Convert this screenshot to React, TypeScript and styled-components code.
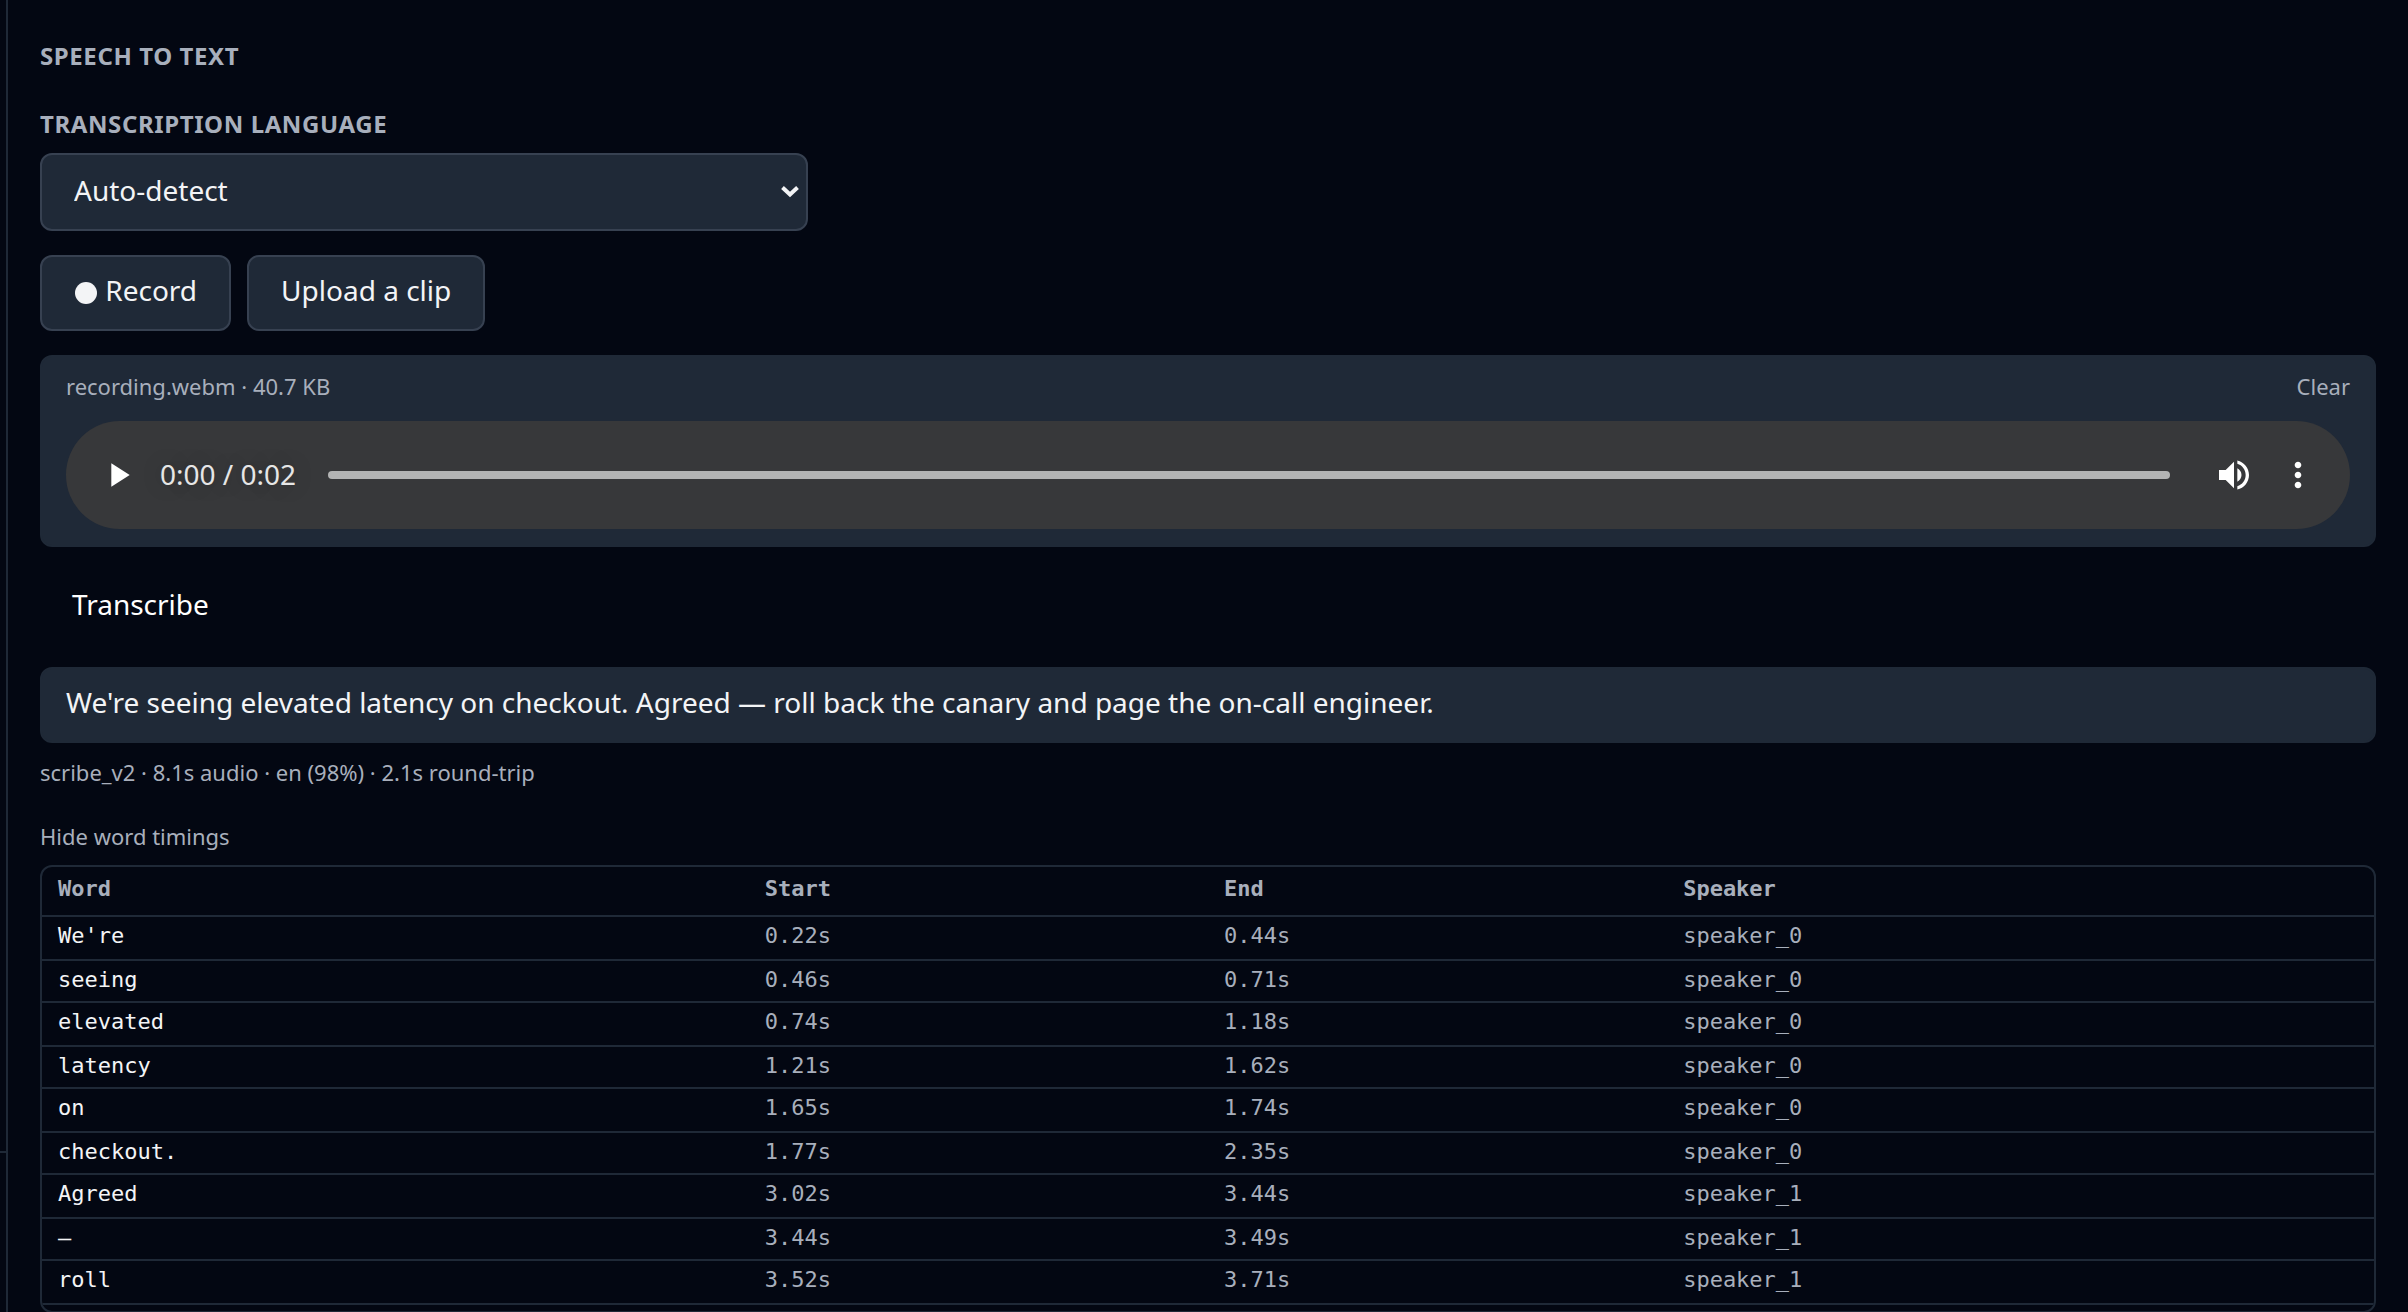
import React, { useState } from "react";
import styled, { createGlobalStyle, css } from "styled-components";

const sans = `"Noto Sans", "Open Sans", sans-serif`;
const mono = `"DejaVu Sans Mono", monospace`;

const c = {
  page: "#030712",
  surface: "#1f2937",
  line: "#1f2937",
  edge: "#374151",
  text: "#f3f4f6",
  muted: "#a8afbc",
  player: "#37383a",
};

const GlobalStyle = createGlobalStyle`
  *, *::before, *::after { box-sizing: border-box; }
  body { margin: 0; background: ${c.page}; color: ${c.text}; font-family: ${sans}; }
  button, select, input { font: inherit; color: inherit; margin: 0; }
`;

const Page = styled.div`
  display: flex;
  height: 100vh;
  overflow: hidden;
`;

const Sidebar = styled.aside`
  flex: none;
  width: 8px;
  border-right: 2px solid ${c.line};
  display: flex;
  flex-direction: column;
`;

const SidebarBody = styled.div`
  flex: 1;
`;

const SidebarFooter = styled.div`
  height: 161px;
  border-top: 2px solid ${c.line};
`;

const Main = styled.main`
  flex: 1;
  min-width: 0;
  padding: 40px 32px 0;
  display: flex;
  flex-direction: column;
  align-items: stretch;
  gap: 24px;
`;

const heading = css`
  margin: 0;
  font-size: 24px;
  line-height: 32px;
  font-weight: 700;
  letter-spacing: 0.025em;
  text-transform: uppercase;
  color: ${c.muted};
`;

const Title = styled.h2`
  ${heading}
  margin-bottom: 12px;
`;

const Field = styled.div`
  display: flex;
  flex-direction: column;
  gap: 13px;
`;

const FieldLabel = styled.label`
  ${heading}
`;

const SelectWrap = styled.div`
  display: grid;
  align-items: center;
  width: 100%;
  max-width: 768px;

  > * {
    grid-area: 1 / 1;
  }
`;

const Select = styled.select`
  appearance: none;
  width: 100%;
  height: 78px;
  padding: 0 32px 4px;
  font-size: 28px;
  background-color: ${c.surface};
  border: 2px solid ${c.edge};
  border-radius: 12px;
`;

const Chevron = styled.svg`
  justify-self: end;
  width: 20px;
  height: 14px;
  margin-right: 8px;
  pointer-events: none;
  fill: none;
  stroke: ${c.text};
  stroke-width: 4;
`;

const ButtonRow = styled.div`
  display: flex;
  gap: 16px;
`;

const Button = styled.button<{ $plain?: boolean }>`
  align-self: flex-start;
  padding: 13px 32px 19px;
  font-size: 28px;
  line-height: 40px;
  border-radius: 12px;
  border: ${(p) => (p.$plain ? "0" : `2px solid ${c.edge}`)};
  background: ${(p) => (p.$plain ? "transparent" : c.surface)};
  color: ${(p) => (p.$plain ? "#ffffff" : c.text)};
`;

const RecordDot = styled.span`
  display: inline-block;
  width: 22px;
  height: 22px;
  margin: 0 1px;
  vertical-align: -3px;
  border-radius: 50%;
  background: currentColor;
`;

const Card = styled.section`
  background: ${c.surface};
  border: 2px solid ${c.surface};
  border-radius: 12px;
  padding: 13px 24px 16px;
  display: flex;
  flex-direction: column;
  gap: 19px;
`;

const CardHead = styled.div`
  display: flex;
  justify-content: space-between;
  font-size: 22px;
  line-height: 32px;
  color: ${c.muted};
`;

const LinkButton = styled.button`
  align-self: flex-start;
  padding: 0;
  border: 0;
  background: none;
  font-size: 22px;
  line-height: 32px;
  color: ${c.muted};
`;

const Player = styled.div`
  display: flex;
  align-items: center;
  height: 108px;
  padding: 0 20px;
  border-radius: 54px;
  background: ${c.player};
`;

const PlayerButton = styled.button`
  flex: none;
  display: flex;
  align-items: center;
  justify-content: center;
  width: 64px;
  height: 64px;
  padding: 0;
  border: 0;
  background: none;
  color: #ffffff;

  svg {
    width: 40px;
    height: 40px;
    fill: currentColor;
  }
`;

const Time = styled.span`
  padding: 0 32px 2px 10px;
  font-size: 28px;
  line-height: 40px;
  white-space: nowrap;
  color: #e6e6e6;
  text-shadow: 0 0 20px rgba(0, 0, 0, 0.25);
`;

const Seek = styled.input`
  appearance: none;
  flex: 1;
  min-width: 0;
  height: 8px;
  margin-right: 32px;
  border-radius: 4px;
  background: #b3b4b4;

  &::-webkit-slider-thumb {
    appearance: none;
    width: 0;
    height: 0;
  }
`;

const Transcript = styled.p`
  margin: 0;
  padding: 13px 24px 19px;
  background: ${c.surface};
  border: 2px solid ${c.surface};
  border-radius: 12px;
  font-size: 28px;
  line-height: 40px;
`;

const Result = styled.div`
  display: flex;
  flex-direction: column;
  gap: 13px;
`;

const Meta = styled.p`
  margin: 0;
  font-size: 22px;
  line-height: 32px;
  color: ${c.muted};
`;

const Timings = styled.div`
  display: flex;
  flex-direction: column;
  gap: 13px;
  margin-top: 19px;
`;

const TableBox = styled.div`
  flex: none;
  height: 448px;
  overflow-y: auto;
  scrollbar-width: none;
  border: 2px solid ${c.line};
  border-radius: 12px;
`;

const Table = styled.table`
  width: 100%;
  border-collapse: separate;
  border-spacing: 0;
  font-family: ${mono};
  font-size: 22px;
  line-height: 32px;
  text-align: left;
  color: ${c.muted};

  th,
  td {
    padding: 0 16px;
    border-bottom: 2px solid ${c.line};
  }
  th {
    height: 50px;
    padding-bottom: 4px;
  }
  td {
    height: 42px;
    padding-top: 3px;
    vertical-align: top;
  }
  tr:nth-child(odd) td {
    height: 44px;
  }
  td:first-child {
    color: ${c.text};
  }
`;

type Word = [word: string, start: string, end: string, speaker: string];

const words: Word[] = [
  ["We're", "0.22s", "0.44s", "speaker_0"],
  ["seeing", "0.46s", "0.71s", "speaker_0"],
  ["elevated", "0.74s", "1.18s", "speaker_0"],
  ["latency", "1.21s", "1.62s", "speaker_0"],
  ["on", "1.65s", "1.74s", "speaker_0"],
  ["checkout.", "1.77s", "2.35s", "speaker_0"],
  ["Agreed", "3.02s", "3.44s", "speaker_1"],
  ["—", "3.44s", "3.49s", "speaker_1"],
  ["roll", "3.52s", "3.71s", "speaker_1"],
];

export default function App() {
  const [open, setOpen] = useState(true);

  return (
    <Page>
      <GlobalStyle />
      <Sidebar>
        <SidebarBody />
        <SidebarFooter />
      </Sidebar>
      <Main>
        <Title>Speech to text</Title>
        <Field>
          <FieldLabel htmlFor="language">Transcription language</FieldLabel>
          <SelectWrap>
            <Select id="language" defaultValue="auto">
              <option value="auto">Auto-detect</option>
            </Select>
            <Chevron viewBox="0 0 20 14" aria-hidden="true">
              <path d="M2.5 2.5 10 9.5l7.5-7" />
            </Chevron>
          </SelectWrap>
        </Field>
        <ButtonRow>
          <Button type="button">
            <RecordDot aria-hidden="true" /> Record
          </Button>
          <Button type="button">Upload a clip</Button>
        </ButtonRow>
        <Card>
          <CardHead>
            <span>recording.webm · 40.7 KB</span>
            <LinkButton type="button">Clear</LinkButton>
          </CardHead>
          <Player>
            <PlayerButton type="button" aria-label="Play">
              <svg viewBox="0 0 24 24">
                <path d="M8 5v14l11-7z" />
              </svg>
            </PlayerButton>
            <Time>0:00 / 0:02</Time>
            <Seek type="range" min={0} max={2} defaultValue={0} aria-label="Seek" />
            <PlayerButton type="button" aria-label="Mute">
              <svg viewBox="0 0 24 24">
                <path d="M3 9v6h4l5 5V4L7 9H3zm13.5 3c0-1.77-1.02-3.29-2.5-4.03v8.05c1.48-.73 2.5-2.25 2.5-4.02zM14 3.23v2.06c2.89.86 5 3.54 5 6.71s-2.11 5.85-5 6.71v2.06c4.01-.91 7-4.49 7-8.77s-2.99-7.86-7-8.77z" />
              </svg>
            </PlayerButton>
            <PlayerButton type="button" aria-label="More options">
              <svg viewBox="0 0 24 24">
                <path d="M12 8c1.1 0 2-.9 2-2s-.9-2-2-2-2 .9-2 2 .9 2 2 2zm0 2c-1.1 0-2 .9-2 2s.9 2 2 2 2-.9 2-2-.9-2-2-2zm0 6c-1.1 0-2 .9-2 2s.9 2 2 2 2-.9 2-2-.9-2-2-2z" />
              </svg>
            </PlayerButton>
          </Player>
        </Card>
        <Button type="button" $plain>
          Transcribe
        </Button>
        <Result>
          <Transcript>
            We're seeing elevated latency on checkout. Agreed — roll back the canary and page the
            on-call engineer.
          </Transcript>
          <Meta>scribe_v2 · 8.1s audio · en (98%) · 2.1s round-trip</Meta>
          <Timings>
            <LinkButton type="button" aria-expanded={open} onClick={() => setOpen(!open)}>
              {open ? "Hide word timings" : "Show word timings"}
            </LinkButton>
            {open && (
              <TableBox>
                <Table>
                  <thead>
                    <tr>
                      <th scope="col">Word</th>
                      <th scope="col">Start</th>
                      <th scope="col">End</th>
                      <th scope="col">Speaker</th>
                    </tr>
                  </thead>
                  <tbody>
                    {words.map((row) => (
                      <tr key={row[1]}>
                        {row.map((cell, i) => (
                          <td key={i}>{cell}</td>
                        ))}
                      </tr>
                    ))}
                  </tbody>
                </Table>
              </TableBox>
            )}
          </Timings>
        </Result>
      </Main>
    </Page>
  );
}
